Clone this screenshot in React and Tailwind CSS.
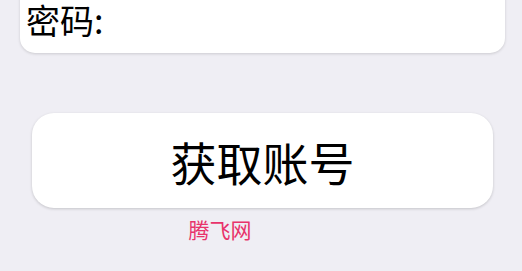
import React from "react";

function App() {
    return (
        <div
            className="w-[522px] h-[271px] overflow-hidden bg-[#efeef4]"
            style={{ fontFamily: '"Noto Sans CJK SC", "Noto Sans", sans-serif' }}
        >
            {/* password card, scrolled partly out of view */}
            <div className="ml-[20px] mr-[17px] -mt-[30px] h-[83px] bg-white rounded-[15px] shadow-[0_1px_3px_rgba(0,0,0,0.15)] flex items-end px-[6px] pb-[16px]">
                <span className="text-[34px] leading-none text-black">密码:</span>
            </div>

            <button className="mt-[60px] ml-[32px] w-[461px] h-[95px] bg-white rounded-[22px] shadow-[0_1px_3px_rgba(0,0,0,0.18)] flex items-center justify-center">
                <span className="text-[46px] leading-none text-black">获取账号</span>
            </button>

            <div className="mt-[11px] w-[440px] text-center text-[21px] leading-none text-[#e8336b]">
                腾飞网
            </div>
        </div>
    );
}

export default App;
